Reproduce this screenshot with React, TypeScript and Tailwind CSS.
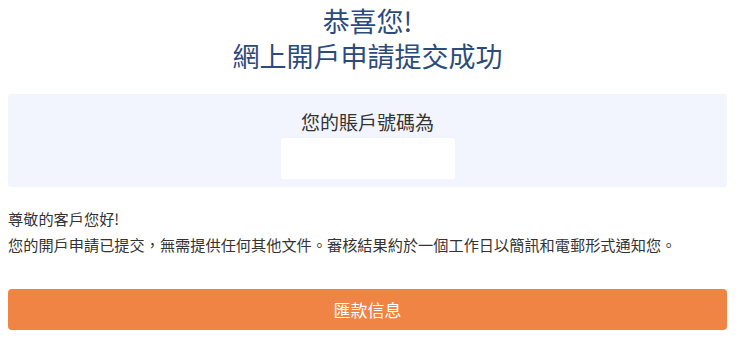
export default function App() {
  return (
    <div
      className="min-h-screen bg-white pl-2 pr-[13px] text-[#333]"
      style={{ fontFamily: '"Noto Sans CJK TC", "Noto Sans", sans-serif' }}
    >
      <h1 className="pt-[3px] text-center text-[27px] font-normal leading-[35px] text-[#2c4b7b]">
        恭喜您!
        <br />
        網上開戶申請提交成功
      </h1>

      <div className="mt-[21px] flex flex-col items-center rounded-[3px] bg-[#f2f5fd] pb-2 pt-[14px]">
        <p className="text-[19px] leading-[28px] text-[#333]">您的賬戶號碼為</p>
        <div className="mt-[2px] h-[41px] w-[174px] rounded-[2px] bg-white" />
      </div>

      <div className="mt-[18px] text-[15.2px] leading-[26px] text-[#333]">
        <p>尊敬的客戶您好!</p>
        <p>您的開戶申請已提交，無需提供任何其他文件。審核結果約於一個工作日以簡訊和電郵形式通知您。</p>
      </div>

      <button
        type="button"
        className="mt-[32px] flex h-[41px] w-full items-center justify-center rounded-[4px] bg-[#ef8444] text-[17px] text-white"
      >
        匯款信息
      </button>
    </div>
  );
}
